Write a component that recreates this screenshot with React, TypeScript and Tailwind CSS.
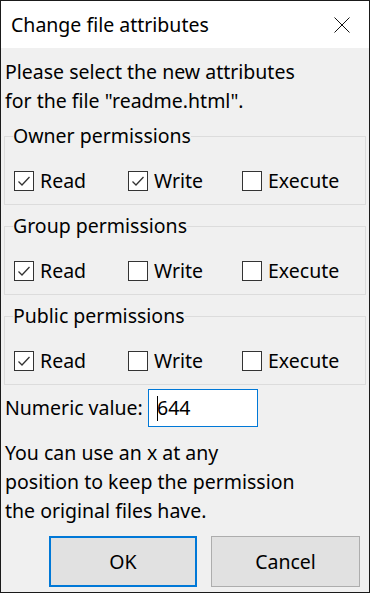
import type { ReactNode } from 'react';

function Check({ checked, label, className = '' }: { checked: boolean; label: string; className?: string }) {
  return (
    <div className={`flex items-center h-[24px] ${className}`}>
      <span className="w-[20px] h-[20px] border border-[#333333] bg-white flex items-center justify-center shrink-0">
        {checked && (
          <svg width="14" height="14" viewBox="0 0 14 14" fill="none">
            <path d="M1.5 7.5 L5 11 L12.5 3" stroke="#333333" strokeWidth="1.3" />
          </svg>
        )}
      </span>
      <span className="ml-[6px]">{label}</span>
    </div>
  );
}

function Group({ title, perms, children }: { title: string; perms: [boolean, boolean, boolean]; children?: ReactNode }) {
  return (
    <fieldset className="mt-[9px] border border-[#dcdcdc] pl-[8px] pb-[11px]">
      <legend className="leading-[24px] h-[24px]">{title}</legend>
      <div className="flex pt-[21px] pl-[1px]">
        <Check checked={perms[0]} label="Read" className="w-[114px]" />
        <Check checked={perms[1]} label="Write" className="w-[114px]" />
        <Check checked={perms[2]} label="Execute" />
      </div>
      {children}
    </fieldset>
  );
}

export default function App() {
  return (
    <div className="w-[370px] h-[593px] border border-[#1a1a1a] flex flex-col font-['Noto_Sans',sans-serif] text-[19.5px] text-black">
      <div className="h-[47px] bg-white flex items-center justify-between pl-[10px] pr-[19px] shrink-0">
        <span>Change file attributes</span>
        <svg width="16" height="16" viewBox="0 0 16 16">
          <path d="M0.5 0.5 L15.5 15.5 M15.5 0.5 L0.5 15.5" stroke="#111111" strokeWidth="1" />
        </svg>
      </div>
      <div className="flex-1 bg-[#f0f0f0] px-[3px] flex flex-col">
        <p className="pt-[9px] leading-[29px] pl-[1px]">
          Please select the new attributes
          <br />
          for the file "readme.html".
        </p>
        <Group title="Owner permissions" perms={[true, true, false]} />
        <Group title="Group permissions" perms={[true, false, false]} />
        <Group title="Public permissions" perms={[true, false, false]} />
        <div className="flex items-center mt-[4px] pl-[1px]">
          <span className="w-[143px]">Numeric value:</span>
          <div className="w-[110px] h-[38px] border border-[#0078d7] bg-white flex items-center pl-[8px]">
            <span className="w-px h-[25px] bg-black -mr-px" />
            <span>644</span>
          </div>
        </div>
        <p className="mt-[11px] leading-[29px] pl-[1px]">
          You can use an x at any
          <br />
          position to keep the permission
          <br />
          the original files have.
        </p>
        <div className="flex gap-[14px] mt-[11px] pl-[45px]">
          <button className="w-[148px] h-[51px] border-2 border-[#0078d7] bg-[#e1e1e1]">OK</button>
          <button className="w-[149px] h-[51px] border border-[#adadad] bg-[#e1e1e1]">Cancel</button>
        </div>
      </div>
    </div>
  );
}
